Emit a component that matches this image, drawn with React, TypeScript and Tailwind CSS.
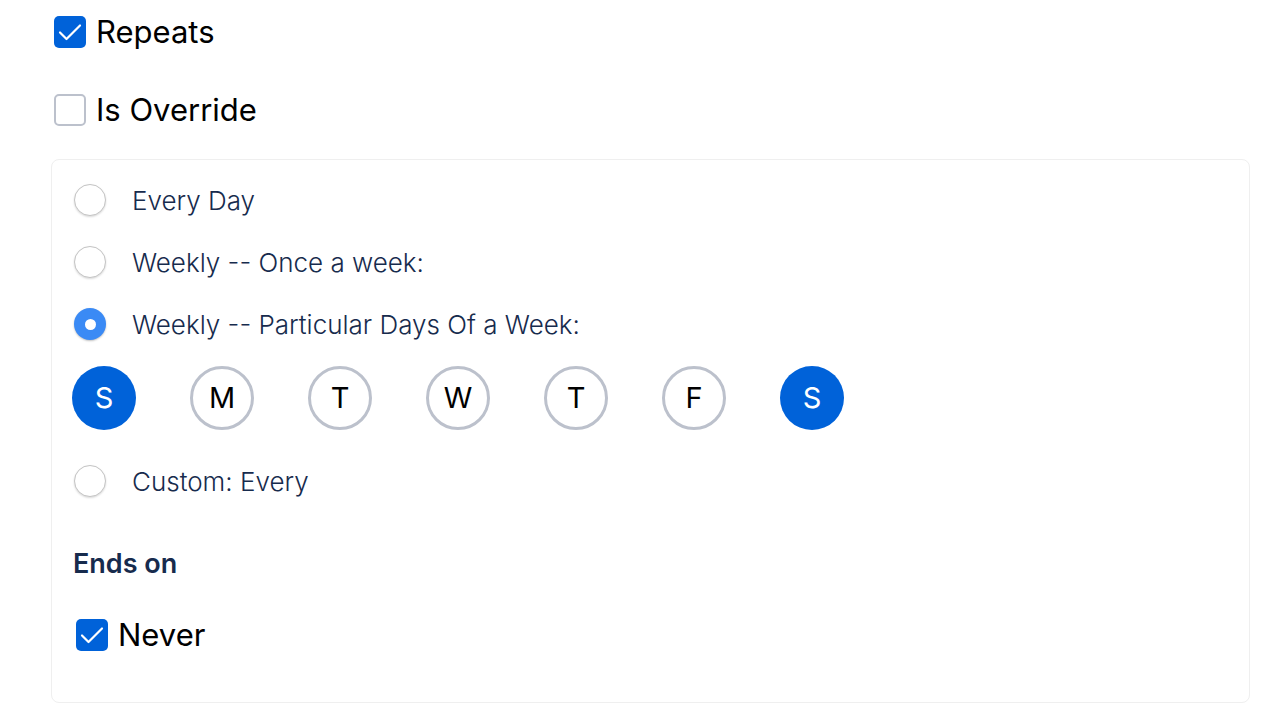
import React, { useState } from 'react'

const font = { fontFamily: 'Inter, "Noto Sans", sans-serif' }

type Frequency = 'daily' | 'weekly' | 'weekdays' | 'custom'

function Checkbox({ checked, onChange }: { checked: boolean; onChange: () => void }) {
  return (
    <button
      onClick={onChange}
      className={`w-8 h-8 rounded-[5px] flex items-center justify-center flex-shrink-0 ${
        checked ? 'bg-[#0062d9]' : 'bg-white border-2 border-[#bcc1cc]'
      }`}
    >
      {checked && (
        <svg width="32" height="32" viewBox="0 0 32 32" fill="none">
          <path d="M6 16.5l6.5 6.5L26 9.5" stroke="white" strokeWidth="2.2" strokeLinecap="round" strokeLinejoin="round" />
        </svg>
      )}
    </button>
  )
}

function Radio({ checked, onChange }: { checked: boolean; onChange: () => void }) {
  return (
    <button
      onClick={onChange}
      className={`w-8 h-8 rounded-full flex items-center justify-center flex-shrink-0 ${
        checked
          ? 'bg-[#3a8af5] shadow-[0_1px_2px_rgba(0,0,0,0.25)]'
          : 'bg-white border border-[#c4c4c4] shadow-[0_1px_2px_rgba(0,0,0,0.15)]'
      }`}
    >
      {checked && <span className="w-[11px] h-[11px] rounded-full bg-white" />}
    </button>
  )
}

const days = ['S', 'M', 'T', 'W', 'T', 'F', 'S']

export default function App() {
  const [repeats, setRepeats] = useState(true)
  const [override, setOverride] = useState(false)
  const [never, setNever] = useState(true)
  const [freq, setFreq] = useState<Frequency>('weekdays')
  const [selectedDays, setSelectedDays] = useState<number[]>([0, 6])

  const toggleDay = (i: number) => {
    setSelectedDays((prev) => (prev.includes(i) ? prev.filter((d) => d !== i) : [...prev, i]))
  }

  const options: { value: Frequency; label: string }[] = [
    { value: 'daily', label: 'Every Day' },
    { value: 'weekly', label: 'Weekly -- Once a week:' },
    { value: 'weekdays', label: 'Weekly -- Particular Days Of a Week:' },
  ]

  return (
    <div className="bg-white w-[1288px] h-[722px] overflow-hidden" style={font}>
      <div className="pl-[54px] pt-4">
        {/* Top checkboxes */}
        <label className="flex items-center gap-[10px] h-8">
          <Checkbox checked={repeats} onChange={() => setRepeats(!repeats)} />
          <span className="text-[31px] text-black">Repeats</span>
        </label>
        <label className="flex items-center gap-[10px] h-8 mt-[46px]">
          <Checkbox checked={override} onChange={() => setOverride(!override)} />
          <span className="text-[31px] text-black">Is Override</span>
        </label>
      </div>

      {/* Repeat options card */}
      <div className="ml-[51px] mt-[33px] w-[1199px] h-[544px] border border-[#efefef] rounded-[8px] pl-[22px] pt-6">
        <div className="flex flex-col gap-[30px]">
          {options.map((opt) => (
            <div key={opt.value} className="flex items-center gap-[26px] h-8">
              <Radio checked={freq === opt.value} onChange={() => setFreq(opt.value)} />
              <span className="text-[26px] text-[#172b4d] font-light">{opt.label}</span>
            </div>
          ))}
        </div>

        {/* Days of week */}
        <div className="flex gap-[54px] mt-[26px] -ml-[2px]">
          {days.map((d, i) => {
            const active = selectedDays.includes(i)
            return (
              <button
                key={i}
                onClick={() => toggleDay(i)}
                className={`w-16 h-16 rounded-full flex items-center justify-center text-[29px] ${
                  active ? 'bg-[#0062d9] text-white' : 'border-[3px] border-[#bcc1cc] text-black'
                }`}
              >
                {d}
              </button>
            )
          })}
        </div>

        <div className="flex items-center gap-[26px] h-8 mt-[35px]">
          <Radio checked={freq === 'custom'} onChange={() => setFreq('custom')} />
          <span className="text-[26px] text-[#172b4d] font-light">Custom: Every</span>
        </div>

        {/* Ends on */}
        <h3 className="text-[27px] font-semibold text-[#172b4d] mt-[51px] -ml-[1px] leading-8">Ends on</h3>
        <label className="flex items-center gap-[10px] h-8 mt-[39px] ml-[2px]">
          <Checkbox checked={never} onChange={() => setNever(!never)} />
          <span className="text-[31px] text-black">Never</span>
        </label>
      </div>
    </div>
  )
}
